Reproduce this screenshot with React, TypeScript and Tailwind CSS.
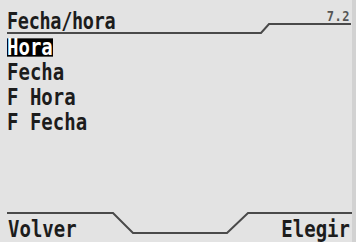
const items = ["Hora", "Fecha", "F Hora", "F Fecha"];

export default function App() {
  return (
    <div className="relative flex h-[242px] w-[356px] flex-col overflow-hidden bg-[#e3e3e3] text-[#1c1c1c] [font-family:'DejaVu_Sans_Mono',monospace]">
      <svg className="pointer-events-none absolute inset-0" width="356" height="242" viewBox="0 0 356 242">
        <polyline points="7,33 261,33 269,24 351,24" fill="none" stroke="#4a4a4a" strokeWidth="2" />
        <polyline points="7,213 113,213 133,233 227,233 248,213 352,213" fill="none" stroke="#4a4a4a" strokeWidth="2" />
      </svg>
      <div className="absolute right-0 top-0 h-full w-[4px] bg-[#d2d2d2]" />

      <header className="flex h-[36px] items-start justify-between pl-[7px] pr-[6px]">
        <span className="mt-[9px] inline-block scale-y-[1.28] text-[18.5px] font-bold leading-[24px] tracking-[-0.3px]">
          Fecha/hora
        </span>
        <span className="mt-[9px] inline-block scale-y-[1.2] text-[12px] font-bold leading-[14px] tracking-[0.5px] text-[#555]">
          7.2
        </span>
      </header>

      <ul className="flex flex-col pl-[7px] pt-[4px]">
        {items.map((item, i) => (
          <li key={item} className="flex h-[25px] items-start">
            <span
              className={
                i === 0
                  ? "inline-block h-[15px] scale-y-[1.22] bg-black text-[19px] font-bold leading-[15px] text-white"
                  : "inline-block h-[15px] scale-y-[1.22] text-[19px] font-bold leading-[15px]"
              }
            >
              {item}
            </span>
          </li>
        ))}
      </ul>

      <footer className="mt-auto flex items-end justify-between pb-[6px] pl-[8px] pr-[6px]">
        <span className="inline-block scale-y-[1.25] text-[19px] font-bold leading-[16px]">Volver</span>
        <span className="inline-block scale-y-[1.25] text-[19px] font-bold leading-[16px]">Elegir</span>
      </footer>
    </div>
  );
}
